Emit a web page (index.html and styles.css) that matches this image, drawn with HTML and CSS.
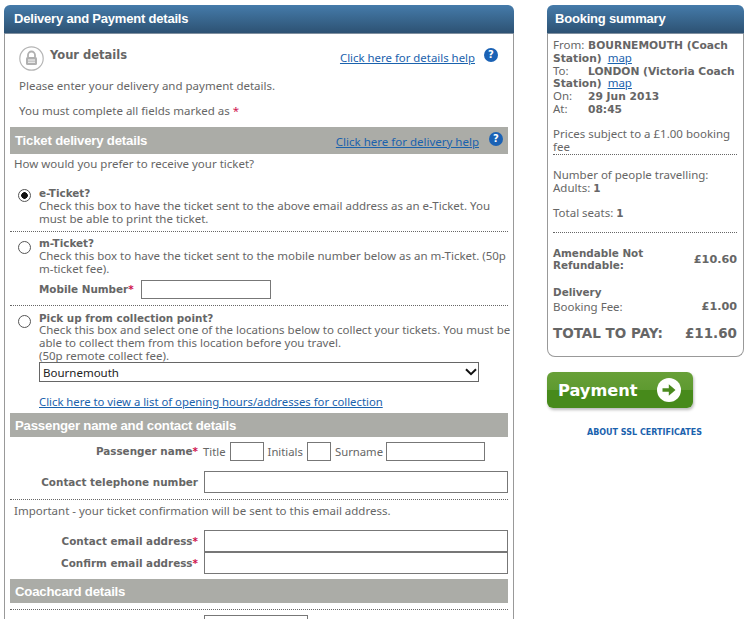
FILE: index.html
```html
<!DOCTYPE html>
<html>
<head>
    <meta charset="UTF-8">
    <title>Delivery and Payment details</title>
    <link rel="stylesheet" href="styles.css">
</head>
<body>
    <div class="page">
        <div class="main">
            <h1 class="panel-title">Delivery and Payment details</h1>
            <div class="panel-body">
                <div class="intro">
                    <div class="details-head">
                        <svg class="lock-icon" width="25" height="25" viewBox="0 0 25 25">
                            <circle cx="12.5" cy="12.5" r="11.7" fill="#fff" stroke="#b5b5b5" stroke-width="1.2"/>
                            <path d="M9 11V9a3.5 3.5 0 0 1 7 0v2" fill="none" stroke="#b0b0b0" stroke-width="1.8"/>
                            <rect x="7" y="11" width="11" height="8" rx="1.5" fill="#b0b0b0"/>
                            <path d="M9 14h7M9 16.2h7" stroke="#fff" stroke-width="1"/>
                        </svg>
                        <h2 class="details-title">Your details</h2>
                        <a class="help-link details-link" href="#">Click here for details help</a>
                        <span class="help-icon">?</span>
                    </div>
                    <p class="intro-line">Please enter your delivery and payment details.</p>
                    <p class="intro-line second">You must complete all fields marked as <span class="req">*</span></p>
                </div>

                <div class="section-bar tall">
                    <h3>Ticket delivery details</h3>
                    <a class="help-link" href="#">Click here for delivery help</a>
                    <span class="help-icon">?</span>
                </div>
                <p class="question">How would you prefer to receive your ticket?</p>

                <div class="option first">
                    <input class="radio" type="radio" name="delivery" checked>
                    <div class="option-text">
                        <strong>e-Ticket?</strong><br>
                        Check this box to have the ticket sent to the above email address as an e-Ticket. You must be able to print the ticket.
                    </div>
                </div>
                <div class="option">
                    <input class="radio" type="radio" name="delivery">
                    <div class="option-text">
                        <strong>m-Ticket?</strong><br>
                        Check this box to have the ticket sent to the mobile number below as an m-Ticket. (50p m-ticket fee).
                        <div class="mobile-row">
                            <strong>Mobile Number<span class="req">*</span></strong>
                            <input class="field mobile" type="text">
                        </div>
                    </div>
                </div>
                <div class="option last">
                    <input class="radio" type="radio" name="delivery">
                    <div class="option-text">
                        <strong>Pick up from collection point?</strong>
                        Check this box and select one of the locations below to collect your tickets. You must be able to collect them from this location before you travel.<br>
                        (50p remote collect fee).
                        <div class="location-box">
                            <select class="location">
                                <option>Bournemouth</option>
                            </select>
                            <svg class="chevron" width="12" height="8" viewBox="0 0 12 8">
                                <path d="M1 1.2l5 5 5-5" fill="none" stroke="#111" stroke-width="2"/>
                            </svg>
                        </div>
                        <a class="help-link list-link" href="#">Click here to view a list of opening hours/addresses for collection</a>
                    </div>
                </div>

                <div class="section-bar">
                    <h3>Passenger name and contact details</h3>
                </div>
                <div class="form-row name-row">
                    <label class="form-label">Passenger name<span class="req">*</span></label>
                    <div class="name-fields">
                        <span>Title</span><input class="field title-field" type="text">
                        <span>Initials</span><input class="field initials-field" type="text">
                        <span>Surname</span><input class="field surname-field" type="text">
                    </div>
                </div>
                <div class="form-row phone-row">
                    <label class="form-label">Contact telephone number</label>
                    <input class="field wide" type="text">
                </div>
                <p class="important">Important - your ticket confirmation will be sent to this email address.</p>
                <div class="form-row">
                    <label class="form-label">Contact email address<span class="req">*</span></label>
                    <input class="field wide" type="text">
                </div>
                <div class="form-row">
                    <label class="form-label">Confirm email address<span class="req">*</span></label>
                    <input class="field wide" type="text">
                </div>

                <div class="section-bar coachcard">
                    <h3>Coachcard details</h3>
                </div>
                <div class="form-row card-row">
                    <input class="field card-field" type="text">
                </div>
            </div>
        </div>

        <div class="side">
            <div class="summary">
                <h1 class="panel-title">Booking summary</h1>
                <div class="summary-body">
                    <div class="journey">
                        <span class="stop-label">From:</span><b>BOURNEMOUTH (Coach Station)</b> &nbsp;<a href="#">map</a><br>
                        <span class="stop-label">To:</span><b>LONDON (Victoria Coach Station)</b> &nbsp;<a href="#">map</a><br>
                        <span class="stop-label">On:</span><b>29 Jun 2013</b><br>
                        <span class="stop-label">At:</span><b>08:45</b>
                    </div>
                    <p class="fee-note">Prices subject to a £1.00 booking fee</p>
                    <p class="people">Number of people travelling:<br>Adults: <b>1</b></p>
                    <p class="seats">Total seats: <b>1</b></p>
                    <div class="price-row ticket-price">
                        <b>Amendable Not Refundable:</b>
                        <b class="amount">£10.60</b>
                    </div>
                    <p class="delivery-head"><b>Delivery</b></p>
                    <div class="price-row fee-row">
                        <span>Booking Fee:</span>
                        <b class="amount">£1.00</b>
                    </div>
                    <div class="price-row total-row">
                        <b>TOTAL TO PAY:</b>
                        <b>£11.60</b>
                    </div>
                </div>
            </div>
            <a class="pay-button" href="#">
                <span>Payment</span>
                <svg width="24" height="24" viewBox="0 0 24 24">
                    <circle cx="12" cy="12" r="12" fill="#fff"/>
                    <path d="M5.5 10.2h6.3V6.3l6.7 5.7-6.7 5.7v-3.9H5.5z" fill="#4a8a1e"/>
                </svg>
            </a>
            <a class="ssl-link" href="#">ABOUT SSL CERTIFICATES</a>
        </div>
    </div>
</body>
</html>
```

FILE: styles.css
```css
html, body {
    margin: 0;
    height: 619px;
    overflow: hidden;
    background-color: #fff;
}

body {
    font-family: "Noto Sans", sans-serif;
    font-size: 11.5px;
    line-height: 13px;
    color: #666;
}

p, h1, h2, h3 {
    margin: 0;
}

a {
    color: #1a62ad;
}

b, strong, .form-label {
    font-family: "DejaVu Sans", sans-serif;
    font-size: 10.4px;
    font-weight: bold;
    line-height: 1;
}

.req {
    color: #d0144f;
}

.page {
    display: flex;
    align-items: flex-start;
    padding: 5px 2px 0 4px;
}

.main {
    width: 510px;
    flex: none;
}

.side {
    width: 197px;
    margin-left: 33px;
    flex: none;
}

.panel-title {
    height: 29px;
    box-sizing: border-box;
    padding: 6px 10px 0;
    border-radius: 6px 6px 0 0;
    border-bottom: 1px solid #7f8f9f;
    background: linear-gradient(#457baa, #2d5273);
    color: #fff;
    font-family: "Liberation Sans", sans-serif;
    font-size: 13px;
    letter-spacing: -0.2px;
    line-height: 16px;
}

.side .panel-title {
    padding-left: 8px;
}

.panel-body {
    height: 600px;
    padding: 0 5px;
    border: solid #999;
    border-width: 0 1px;
}

/* top of the form */
.intro {
    padding: 0 0 0 9px;
}

.details-head {
    display: flex;
    align-items: flex-start;
    height: 45px;
    padding-top: 12px;
    box-sizing: border-box;
}

.lock-icon {
    flex: none;
}

.details-title {
    margin: 2px 0 0 6px;
    font-family: "DejaVu Sans", sans-serif;
    font-size: 11.5px;
    line-height: 15px;
}

.help-link {
    font-size: 11.5px;
}

.details-link {
    margin: 5px 0 0 auto;
    font-size: 11.4px;
}

.details-head .help-icon {
    margin: 2px 10px 0 9px;
}

.help-icon {
    display: block;
    flex: none;
    width: 14px;
    height: 14px;
    border-radius: 50%;
    background-color: #1b62b5;
    color: #fff;
    font-family: "DejaVu Sans", sans-serif;
    font-size: 10px;
    font-weight: bold;
    line-height: 14px;
    text-align: center;
}

.intro-line.second {
    margin-top: 12px;
    height: 23px;
}

.section-bar {
    display: flex;
    align-items: center;
    height: 24px;
    padding: 0 5px;
    background-color: #abaca7;
}

.section-bar.tall {
    height: 27px;
}

.section-bar h3 {
    margin-right: auto;
    color: #fff;
    font-family: "Liberation Sans", sans-serif;
    font-size: 13.2px;
    letter-spacing: -0.2px;
}

.section-bar .help-link {
    margin-top: 2px;
}

.section-bar .help-icon {
    margin: -3px 0 0 10px;
}

.question {
    padding: 3px 0 0 4px;
    height: 21px;
}

/* delivery choices */
.option {
    display: flex;
    padding: 4px 0 6px 8px;
    border-bottom: 1px dotted #666;
}

.option.first {
    padding-top: 8px;
    padding-bottom: 6px;
}

.option.last {
    border-bottom: 0;
    padding-top: 5px;
    padding-bottom: 5px;
}

.option-text {
    flex: 1;
    margin-right: -6px;
}

.option.last strong {
    display: block;
    margin: 1px 0 -2px;
    line-height: 13px;
}

.radio {
    appearance: none;
    flex: none;
    box-sizing: border-box;
    width: 13px;
    height: 13px;
    margin: 5px 8px 0 0;
    border: 1px solid #555;
    border-radius: 50%;
    background-color: #fff;
}

.option.first .radio {
    margin-top: 3px;
}

.option.last .radio {
    margin-top: 4px;
}

.radio:checked {
    background: radial-gradient(circle, #111 0, #111 3px, #fff 3.6px);
}

.mobile-row {
    display: flex;
    align-items: center;
    gap: 7px;
    margin-top: 5px;
}

.field {
    box-sizing: border-box;
    margin: 0;
    border: 1px solid #777;
    border-radius: 0;
    background-color: #fff;
}

.mobile {
    width: 130px;
    height: 19px;
}

.location-box {
    position: relative;
    width: 440px;
    height: 20px;
}

.location {
    appearance: none;
    display: block;
    width: 100%;
    height: 20px;
    padding: 0 0 0 3px;
    border: 1px solid #666;
    border-radius: 0;
    background-color: #fff;
    color: #222;
    font-family: "Noto Sans", sans-serif;
    font-size: 11.5px;
}

.chevron {
    position: absolute;
    top: 6px;
    right: 2px;
}

.list-link {
    display: block;
    margin-top: 13px;
    font-size: 11.3px;
}

/* passenger rows */
.form-row {
    display: flex;
    align-items: center;
}

.form-label {
    width: 188px;
    flex: none;
    margin-right: 6px;
    text-align: right;
}

.wide {
    flex: 1;
    height: 22px;
}

.name-row {
    padding-top: 5px;
    height: 19px;
}

.name-fields {
    display: flex;
    align-items: center;
    margin-left: -1px;
    gap: 4px;
    font-size: 11.3px;
}

.title-field {
    width: 34px;
    height: 19px;
}

.initials-field {
    width: 24px;
    height: 19px;
}

.surname-field {
    width: 99px;
    height: 19px;
    margin-left: -1px;
}

.phone-row {
    margin-top: 10px;
    padding-bottom: 6px;
    border-bottom: 1px dotted #666;
}

.important {
    height: 30px;
    padding: 4px 0 0 4px;
    box-sizing: border-box;
}

.coachcard {
    margin-top: 5px;
}

.card-row {
    margin-top: 6px;
    padding: 5px 0 0 194px;
    border-top: 1px dotted #666;
}

.card-field {
    width: 104px;
    height: 22px;
}

/* booking summary */
.summary-body {
    height: 323px;
    box-sizing: border-box;
    padding: 5px 6px 0 5px;
    border: 1px solid #999;
    border-top: 0;
    border-radius: 0 0 8px 8px;
}

.journey {
    height: 75px;
    line-height: 12.8px;
}

.journey b {
    font-size: 10.7px;
}

.stop-label {
    display: inline-block;
    width: 35px;
}

.fee-note {
    margin-top: 13px;
    padding-bottom: 1px;
    border-bottom: 1px dotted #666;
}

.people {
    margin-top: 13px;
}

.seats {
    margin-top: 12px;
    padding-bottom: 13px;
    border-bottom: 1px dotted #666;
}

.price-row {
    display: flex;
    align-items: center;
    justify-content: space-between;
}

.ticket-price {
    margin-top: 14px;
}

.ticket-price b:first-child {
    width: 110px;
    line-height: 12px;
}

.ticket-price .amount {
    margin-top: 2px;
}

.amount {
    font-size: 11.2px;
}

.delivery-head {
    margin-top: 14px;
}

.fee-row {
    margin-top: 2px;
}

.total-row {
    margin-top: 14px;
}

.total-row b {
    font-size: 13.5px;
}

.pay-button {
    display: flex;
    align-items: center;
    justify-content: space-between;
    width: 146px;
    height: 36px;
    box-sizing: border-box;
    margin-top: 15px;
    padding: 0 12px 0 11px;
    border-radius: 6px;
    background: linear-gradient(#68a038 0, #5e9a30 50%, #478a1b 50%, #478a1b 100%);
    box-shadow: 1px 2px 3px #bbb;
    color: #fff;
    font-family: "DejaVu Sans", sans-serif;
    font-size: 16.2px;
    font-weight: bold;
    text-decoration: none;
}

.ssl-link {
    display: block;
    margin: 18px 0 0 40px;
    font-family: "DejaVu Sans", sans-serif;
    font-size: 8px;
    font-weight: bold;
    text-decoration: none;
}
```
